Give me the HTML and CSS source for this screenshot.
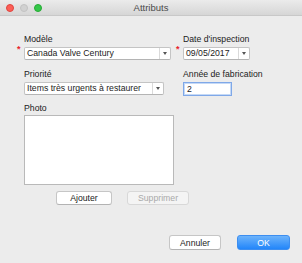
FILE: index.html
```html
<!DOCTYPE html>
<html lang="fr">
<head>
<meta charset="utf-8">
<title>Attributs</title>
<link rel="stylesheet" href="styles.css">
</head>
<body>
<div class="window">
  <div class="titlebar">
    <div class="lights">
      <span class="light red"></span>
      <span class="light grey"></span>
      <span class="light green"></span>
    </div>
    <div class="title">Attributs</div>
    <div></div>
  </div>
  <div class="content">
    <div class="fields">
      <div class="cell">
        <label class="label">Modèle</label>
        <div class="field-wrap">
          <span class="req">*</span>
          <div class="select select-model">
            <span class="value">Canada Valve Century</span>
            <span class="arrow"><i></i></span>
          </div>
        </div>
      </div>
      <div class="cell">
        <label class="label">Date d'inspection</label>
        <div class="field-wrap">
          <span class="req">*</span>
          <div class="select select-date">
            <span class="value">09/05/2017</span>
            <span class="arrow"><i></i></span>
          </div>
        </div>
      </div>
      <div class="cell">
        <label class="label">Priorité</label>
        <div class="select select-prio">
          <span class="value">Items très urgents à restaurer</span>
          <span class="arrow"><i></i></span>
        </div>
      </div>
      <div class="cell">
        <label class="label">Année de fabrication</label>
        <div class="input">2</div>
      </div>
    </div>
    <label class="label photo-label">Photo</label>
    <div class="photo-box"></div>
    <div class="photo-actions">
      <button class="btn btn-add">Ajouter</button>
      <button class="btn btn-del" disabled>Supprimer</button>
    </div>
    <div class="footer">
      <button class="btn btn-cancel">Annuler</button>
      <button class="btn btn-ok">OK</button>
    </div>
  </div>
</div>
</body>
</html>
```

FILE: styles.css
```css
* { box-sizing: border-box; }
html, body { margin: 0; padding: 0; }
body {
  font-family: "Liberation Sans", Arial, sans-serif;
  font-size: 8.7px;
  color: #222;
  background: #ececec;
}
.window {
  width: 302px;
  height: 263px;
  background: #ececec;
  overflow: hidden;
}
.titlebar {
  height: 16px;
  display: grid;
  grid-template-columns: 1fr auto 1fr;
  align-items: center;
  background: linear-gradient(#ebebeb, #d6d6d6);
  border-bottom: 1px solid #c8c8c8;
}
.lights {
  display: flex;
  gap: 6px;
  padding-left: 6px;
}
.light {
  width: 8px;
  height: 8px;
  border-radius: 50%;
  display: block;
}
.red { background: #fc5f57; border: 0.5px solid #e0443e; }
.grey { background: #d1d1d1; border: 0.5px solid #c2c2c2; }
.green { background: #34c749; border: 0.5px solid #27aa35; }
.title {
  font-size: 9.5px;
  color: #4a4a4a;
  line-height: 16px;
}
.content {
  padding: 18px 12px 0 24px;
}
.fields {
  display: grid;
  grid-template-columns: 148px 67px;
  column-gap: 11px;
  row-gap: 9px;
}
.cell {
  display: flex;
  flex-direction: column;
  gap: 3px;
}
.label {
  display: block;
  line-height: 10px;
  height: 10px;
  color: #222;
  white-space: nowrap;
}
.field-wrap { position: relative; }
.req {
  position: absolute;
  left: -7px;
  top: -3px;
  color: #e8232a;
  font-size: 9px;
  line-height: 10px;
  font-weight: bold;
}
.select {
  display: flex;
  height: 13px;
  background: #fff;
  border: 1px solid #c4c4c4;
  border-bottom-color: #b4b4b4;
  border-radius: 2px;
  line-height: 11px;
}
.select .value {
  flex: 1;
  padding-left: 2px;
  white-space: nowrap;
  overflow: hidden;
  color: #1c1c1c;
}
.select .arrow {
  width: 11px;
  border-left: 1px solid #dadada;
  display: flex;
  align-items: center;
  justify-content: center;
}
.select .arrow i {
  width: 0;
  height: 0;
  border-left: 2px solid transparent;
  border-right: 2px solid transparent;
  border-top: 3px solid #555;
}
.select-model { width: 147px; }
.select-prio { width: 140px; }
.select-date { width: 67px; }
.input {
  width: 49px;
  height: 14px;
  background: #fff;
  border: 1px solid #7fa8e8;
  box-shadow: inset 0 0 0 1px #c5d9f6;
  padding-left: 3px;
  line-height: 12px;
  color: #1c1c1c;
}
.photo-label { margin-top: 7px; }
.photo-box {
  margin-top: 2px;
  width: 150px;
  height: 70px;
  background: #fff;
  border: 1px solid #b9b9b9;
}
.photo-actions {
  display: flex;
  gap: 15px;
  padding-left: 32px;
  margin-top: 6px;
}
.btn {
  font-family: inherit;
  font-size: 8.7px;
  height: 14px;
  padding: 0;
  line-height: 12px;
  background: #fff;
  color: #222;
  border: 1px solid #c6c6c6;
  border-bottom-color: #b3b3b3;
  border-radius: 3px;
  text-align: center;
}
.btn-add { width: 56px; }
.btn-del {
  width: 62px;
  background: #f4f4f4;
  color: #a9a9a9;
  border-color: #d8d8d8;
}
.footer {
  display: flex;
  justify-content: flex-end;
  gap: 16px;
  margin-top: 30px;
}
.btn-cancel { width: 52px; height: 15px; }
.btn-ok {
  width: 53px;
  height: 15px;
  color: #fff;
  background: linear-gradient(#6db3fb, #2286fa);
  border-color: #3d8ef0;
}
```
